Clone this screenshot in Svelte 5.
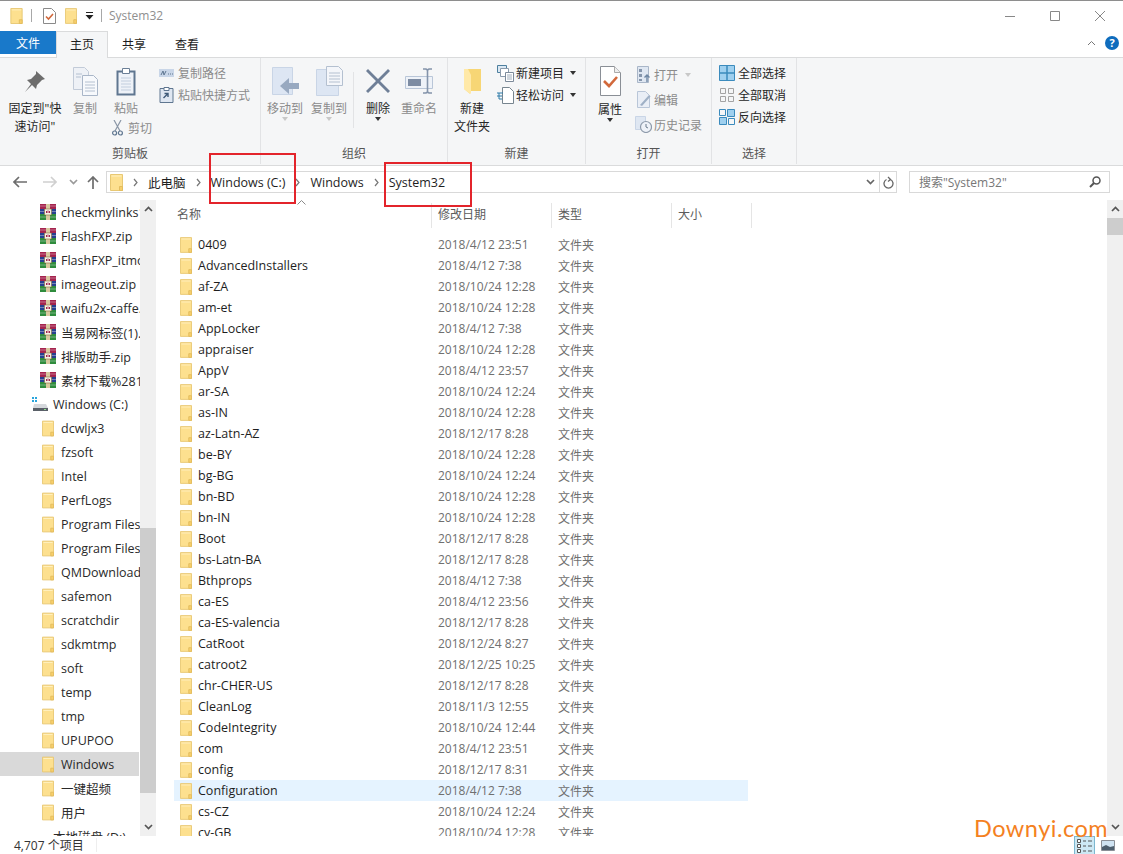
<script lang="ts">
  const ZIPS = [
    'checkmylinks1.2.zip',
    'FlashFXP.zip',
    'FlashFXP_itmop.zip',
    'imageout.zip',
    'waifu2x-caffe.zip',
    '当易网标签(1).zip',
    '排版助手.zip',
    '素材下载%281%29.zip',
  ];

  const TREE = [
    'dcwljx3', 'fzsoft', 'Intel', 'PerfLogs', 'Program Files', 'Program Files (x86)',
    'QMDownload', 'safemon', 'scratchdir', 'sdkmtmp', 'soft', 'temp', 'tmp', 'UPUPOO',
    'Windows', '一键超频', '用户',
  ];

  const FILES: [string, string][] = [
    ['0409', '2018/4/12 23:51'],
    ['AdvancedInstallers', '2018/4/12 7:38'],
    ['af-ZA', '2018/10/24 12:28'],
    ['am-et', '2018/10/24 12:28'],
    ['AppLocker', '2018/4/12 7:38'],
    ['appraiser', '2018/10/24 12:28'],
    ['AppV', '2018/4/12 23:57'],
    ['ar-SA', '2018/10/24 12:24'],
    ['as-IN', '2018/10/24 12:28'],
    ['az-Latn-AZ', '2018/12/17 8:28'],
    ['be-BY', '2018/10/24 12:28'],
    ['bg-BG', '2018/10/24 12:24'],
    ['bn-BD', '2018/10/24 12:28'],
    ['bn-IN', '2018/10/24 12:28'],
    ['Boot', '2018/12/17 8:28'],
    ['bs-Latn-BA', '2018/12/17 8:28'],
    ['Bthprops', '2018/4/12 7:38'],
    ['ca-ES', '2018/4/12 23:56'],
    ['ca-ES-valencia', '2018/12/17 8:28'],
    ['CatRoot', '2018/12/24 8:27'],
    ['catroot2', '2018/12/25 10:25'],
    ['chr-CHER-US', '2018/12/17 8:28'],
    ['CleanLog', '2018/11/3 12:55'],
    ['CodeIntegrity', '2018/10/24 12:44'],
    ['com', '2018/4/12 23:51'],
    ['config', '2018/12/17 8:31'],
    ['Configuration', '2018/4/12 7:38'],
    ['cs-CZ', '2018/10/24 12:24'],
    ['cy-GB', '2018/10/24 12:28'],
  ];
</script>

{#snippet folder(w = 13, h = 17)}
  <svg class="ico" width={w} height={h} viewBox="0 0 13 17" aria-hidden="true">
    <path d="M.5.5h12v16H.5z" fill="#fde08f" stroke="#e8c873" />
    <path d="M9.5 12.5h3v4h-3z" fill="#f7cf6b" stroke="#e3bd5f" />
    <path d="M1.5 1.5h10v1h-10z" fill="#fff0c0" />
  </svg>
{/snippet}

{#snippet zip()}
  <svg class="ico" width="16" height="16" viewBox="0 0 16 16" aria-hidden="true">
    <path d="M0 0h16v5H0z" fill="#a5244e" />
    <path d="M0 5h16v5H0z" fill="#27408f" />
    <path d="M0 10h16v6H0z" fill="#2f8c3d" />
    <path d="M0 2h16M0 7.5h16M0 13h16" stroke="#fff" stroke-opacity=".35" />
    <path d="M6 0h4v16H6z" fill="#d9c9a0" />
    <path d="M4.5 5h7v6h-7z" fill="#f6f2e6" stroke="#8a6d3b" stroke-width=".6" />
    <path d="M6.5 7v2M8 6.5V9M9.5 7v2" stroke="#a5244e" />
  </svg>
{/snippet}

{#snippet chev(d = 'down', c = '#555')}
  <svg class="ico" width="9" height="6" viewBox="0 0 9 6" aria-hidden="true">
    <path d={d === 'down' ? 'M1 1l3.5 3.5L8 1' : 'M1 5l3.5-3.5L8 5'} fill="none" stroke={c} stroke-width="1.7" />
  </svg>
{/snippet}

{#snippet crumb()}
  <svg class="ico crumb" width="5" height="9" viewBox="0 0 5 9" aria-hidden="true">
    <path d="M1 1l3 3.5L1 8" fill="none" stroke="#777" stroke-width="1.2" />
  </svg>
{/snippet}

<div class="window">
  <div class="topline"></div>

  <header class="titlebar">
    {@render folder(13, 16)}
    <span class="tsep"></span>
    <svg class="ico" width="13" height="16" viewBox="0 0 13 16" aria-hidden="true">
      <path d="M.5.5h8l4 4v11H.5z" fill="#fff" stroke="#8a8a8a" />
      <path d="M3 8.5l2.5 2.5L10 6" fill="none" stroke="#d0673a" stroke-width="1.6" />
    </svg>
    <span class="tfolder">{@render folder(12, 16)}</span>
    <svg class="ico qat" width="9" height="8" viewBox="0 0 9 8" aria-hidden="true">
      <path d="M1 0h7v1H1zM.5 3h8L4.5 7.5z" fill="#222" />
    </svg>
    <span class="tsep second"></span>
    <span class="title">System32</span>
    <div class="winctl">
      <svg width="10" height="10" viewBox="0 0 10 10" aria-hidden="true"><path d="M0 5.5h10" stroke="#888" /></svg>
      <svg width="10" height="10" viewBox="0 0 10 10" aria-hidden="true"><path d="M.5.5h9v9h-9z" fill="none" stroke="#888" /></svg>
      <svg width="10" height="10" viewBox="0 0 10 10" aria-hidden="true"><path d="M0 0l10 10M10 0L0 10" stroke="#888" /></svg>
    </div>
  </header>

  <nav class="tabs">
    <span class="tab file">文件</span>
    <span class="tab active">主页</span>
    <span class="tab share">共享</span>
    <span class="tab view">查看</span>
    <div class="tabs-right">
      <svg width="9" height="6" viewBox="0 0 9 6" aria-hidden="true"><path d="M1 5l3.5-3.5L8 5" fill="none" stroke="#777" /></svg>
      <span class="help">?</span>
    </div>
  </nav>

  <section class="ribbon">
    <div class="group g1">
      <div class="gbody">
        <div class="large w-pin">
          <div class="licon">
            <svg width="24" height="24" viewBox="0 0 24 24" aria-hidden="true">
              <path d="M13 2l9 8-3 1-5 5-1 4-4-4-7 7 6-8-4-4 4-1 5-5z" fill="#6d6d6d" />
            </svg>
          </div>
          <span class="dark">固定到"快<br />速访问"</span>
        </div>
        <div class="large w-copy dim">
          <div class="licon">
            <svg width="25" height="29" viewBox="0 0 25 29" aria-hidden="true">
              <path d="M.5.5h11l4 4v18H.5z" fill="#eef1f6" stroke="#c2cbd8" />
              <path d="M9.5 8.5h11l4 4v16h-15z" fill="#f7f9fc" stroke="#a9b6c8" />
              <path d="M12 15h10M12 18h10M12 21h10M12 24h10M3 7h6M3 10h5" stroke="#b4c0d0" />
            </svg>
          </div>
          <span>复制</span>
        </div>
        <div class="paste-col">
          <div class="large dim">
            <div class="licon">
              <svg width="20" height="29" viewBox="0 0 20 29" aria-hidden="true">
                <path d="M.5 3.5h19v25H.5z" fill="#5f7690" />
                <path d="M2.5 5.5h15v21h-15z" fill="#eef2f8" />
                <path d="M6.5 1.5h7v5h-7z" fill="#fff" stroke="#6b7f96" />
                <path d="M5 11h10M5 14h10M5 17h10M5 20h10M5 23h10" stroke="#c2cede" />
              </svg>
            </div>
            <span>粘贴</span>
          </div>
          <div class="cut">
            <svg width="11" height="16" viewBox="0 0 11 16" aria-hidden="true">
              <path d="M2 0l6 11M9 0L3 11" stroke="#8a96a6" stroke-width="1.2" />
              <circle cx="2.6" cy="13" r="2" fill="none" stroke="#5f7690" stroke-width="1.2" />
              <circle cx="8.4" cy="13" r="2" fill="none" stroke="#5f7690" stroke-width="1.2" />
            </svg>
            <span>剪切</span>
          </div>
        </div>
        <div class="smalls">
          <div class="small dim">
            <svg class="sic" width="15" height="8" viewBox="0 0 15 8" aria-hidden="true">
              <path d="M0 0h15v8H0z" fill="#c9d6e8" />
              <path d="M2 6l2-4 1 4 2-4M9 5h1M11 5h1M13 5h1" stroke="#5f7690" fill="none" />
            </svg>
            <span>复制路径</span>
          </div>
          <div class="small dim">
            <svg class="sic" width="14" height="16" viewBox="0 0 14 16" aria-hidden="true">
              <path d="M.5 1.5h13v14H.5z" fill="#dfe7f2" stroke="#5f7690" />
              <path d="M4.5.5h5v3h-5z" fill="#fff" stroke="#5f7690" />
              <path d="M4 11l4-4M5 6.5h3.5V10" fill="none" stroke="#3f5a78" stroke-width="1.4" />
            </svg>
            <span>粘贴快捷方式</span>
          </div>
        </div>
      </div>
      <div class="glabel">剪贴板</div>
    </div>

    <div class="group g2">
      <div class="gbody">
        <div class="large w-move dim">
          <div class="licon">
            <svg width="27" height="29" viewBox="0 0 27 29" aria-hidden="true">
              <path d="M.5.5h20v27H.5z" fill="#dde6f3" stroke="#c9d5e6" />
              <path d="M27 16h-10v-5l-9 8 9 8v-5h10z" fill="#98a9c0" />
            </svg>
          </div>
          <span>移动到</span>
          <i class="mini grey"></i>
        </div>
        <div class="large w-move dim">
          <div class="licon">
            <svg width="27" height="30" viewBox="0 0 27 30" aria-hidden="true">
              <path d="M.5 3.5h22v26H.5z" fill="#dde6f3" stroke="#c9d5e6" />
              <path d="M10.5.5h12l4 4v15h-16z" fill="#f4f6fa" stroke="#b4c0d0" />
              <path d="M13 7h11M13 10h11M13 13h11M13 16h11" stroke="#b4c0d0" />
            </svg>
          </div>
          <span>复制到</span>
          <i class="mini grey"></i>
        </div>
        <span class="vsep"></span>
        <div class="large w-del">
          <div class="licon">
            <svg width="26" height="26" viewBox="0 0 26 26" aria-hidden="true">
              <path d="M3 1l10 10L23 1l2 2-10 10 10 10-2 2-10-10L3 25l-2-2 10-10L1 3z" fill="#6f7f97" />
            </svg>
          </div>
          <span class="dark">删除</span>
          <i class="mini"></i>
        </div>
        <div class="large w-ren dim">
          <div class="licon">
            <svg width="29" height="26" viewBox="0 0 29 26" aria-hidden="true">
              <path d="M.5 8.5h27v12H.5z" fill="#eef2f8" stroke="#b9c6d8" />
              <path d="M3 11h13v7H3z" fill="#7d8ca3" />
              <path d="M18 1h3l1.500 1L24 1h3M18 25h3l1.500-1 1.500 1h3M22.500 2v22" fill="none" stroke="#8494ab" stroke-width="1.6" />
            </svg>
          </div>
          <span>重命名</span>
        </div>
      </div>
      <div class="glabel">组织</div>
    </div>

    <div class="group g3">
      <div class="gbody">
        <div class="large w-new">
          <div class="licon">
            <svg width="19" height="27" viewBox="0 0 19 27" aria-hidden="true">
              <path d="M1 1h17v22H5z" fill="#f7d675" />
              <path d="M1 1l6 5v20l-6-5z" fill="#fbe08f" />
              <path d="M1 1h4l3 6v19l-7-5z" fill="#ffe9a8" />
            </svg>
          </div>
          <span class="dark">新建<br />文件夹</span>
        </div>
        <div class="smalls">
          <div class="small">
            <svg class="sic" width="17" height="17" viewBox="0 0 17 17" aria-hidden="true">
              <path d="M.5.500h9v7h-9z" fill="#dbe8f3" stroke="#4d7f9e" />
              <path d="M3.500 3.500h8v8h-8z" fill="#fff" stroke="#8a9aab" />
              <path d="M8.500 7.500h8v9h-8z" fill="#fff" stroke="#7c8a9a" />
              <path d="M10 10h5M10 12h5M10 14h5" stroke="#a0adbb" />
            </svg>
            <span class="dark">新建项目</span>
            <i class="mini side"></i>
          </div>
          <div class="small">
            <svg class="sic" width="17" height="17" viewBox="0 0 17 17" aria-hidden="true">
              <path d="M5.500.5h7l4 4v12h-11z" fill="#fff" stroke="#77858f" />
              <path d="M0 6h6M0 9h5M2 12h3M2 6v6" stroke="#2c7aa8" fill="none" />
            </svg>
            <span class="dark">轻松访问</span>
            <i class="mini side"></i>
          </div>
        </div>
      </div>
      <div class="glabel">新建</div>
    </div>

    <div class="group g4">
      <div class="gbody">
        <div class="large w-prop">
          <div class="licon">
            <svg width="21" height="30" viewBox="0 0 21 30" aria-hidden="true">
              <path d="M.5.5h14l6 6v23H.5z" fill="#fff" stroke="#8a8f96" />
              <path d="M14.500.5v6h6" fill="#eee" stroke="#aaa" />
              <path d="M4 15l5 5 8-9" fill="none" stroke="#d2693c" stroke-width="2.6" />
            </svg>
          </div>
          <span class="dark">属性</span>
          <i class="mini"></i>
        </div>
        <div class="smalls tall">
          <div class="small dim">
            <svg class="sic" width="14" height="17" viewBox="0 0 14 17" aria-hidden="true">
              <path d="M.5.5h11v16H.5z" fill="#dfe7f2" stroke="#a9b6c8" />
              <path d="M2 3h3v3H2zM2 8h3v3H2zM2 13h3v2H2z" fill="#8696ac" />
              <path d="M10 16V9M7.500 11.500L10 9l2.500 2.500" fill="none" stroke="#6d86a3" stroke-width="1.4" />
            </svg>
            <span>打开</span>
            <i class="mini side grey"></i>
          </div>
          <div class="small dim">
            <svg class="sic" width="14" height="17" viewBox="0 0 14 17" aria-hidden="true">
              <path d="M.5.5h8l4 4v12H.5z" fill="#e9eef6" stroke="#b9c6d8" />
              <path d="M3 14l9-10 1.500 1.500L5 15z" fill="#9fb0c6" />
            </svg>
            <span>编辑</span>
          </div>
          <div class="small dim">
            <svg class="sic hist" width="17" height="17" viewBox="0 0 17 17" aria-hidden="true">
              <path d="M.5.5h10v13H.5z" fill="#dfe7f2" stroke="#c9d5e6" />
              <circle cx="11" cy="11" r="5.500" fill="#eef2f8" stroke="#8e9bab" stroke-width="1.2" />
              <path d="M11 8v3l2 1" fill="none" stroke="#6b7a8c" />
            </svg>
            <span>历史记录</span>
          </div>
        </div>
      </div>
      <div class="glabel">打开</div>
    </div>

    <div class="group g5">
      <div class="gbody">
        <div class="smalls">
          <div class="small">
            <svg class="sic" width="16" height="16" viewBox="0 0 16 16" aria-hidden="true">
              <path d="M.5.500h15v15H.5z" fill="#9fd0ef" stroke="#3b8bbd" />
              <path d="M8 0v16M0 8h16" stroke="#3b8bbd" stroke-width="1.500" />
            </svg>
            <span class="dark">全部选择</span>
          </div>
          <div class="small">
            <svg class="sic" width="14" height="14" viewBox="0 0 14 14" aria-hidden="true">
              <path d="M.5.500h5v5h-5zM8.500.500h5v5h-5zM.5 8.500h5v5h-5zM8.500 8.500h5v5h-5z" fill="none" stroke="#a3a3a3" />
            </svg>
            <span class="dark">全部取消</span>
          </div>
          <div class="small">
            <svg class="sic" width="16" height="16" viewBox="0 0 16 16" aria-hidden="true">
              <path d="M8.500.500h7v7h-7zM.5 8.500h7v7h-7z" fill="#9fd0ef" stroke="#3b8bbd" />
              <path d="M.5.500h6v6h-6zM9.500 9.500h6v6h-6z" fill="none" stroke="#3b8bbd" />
            </svg>
            <span class="dark">反向选择</span>
          </div>
        </div>
      </div>
      <div class="glabel">选择</div>
    </div>
  </section>

  <div class="addressbar">
    <svg class="navbtn back" width="14" height="12" viewBox="0 0 14 12" aria-hidden="true">
      <path d="M6 1L1 6l5 5M1 6h13" fill="none" stroke="#6d6d6d" stroke-width="1.700" />
    </svg>
    <svg class="navbtn fwd" width="14" height="12" viewBox="0 0 14 12" aria-hidden="true">
      <path d="M8 1l5 5-5 5M13 6H0" fill="none" stroke="#d0d0d0" stroke-width="1.700" />
    </svg>
    <span class="navbtn recent">{@render chev('down', '#9a9a9a')}</span>
    <svg class="navbtn up" width="12" height="13" viewBox="0 0 12 13" aria-hidden="true">
      <path d="M1 6l5-5 5 5M6 1v12" fill="none" stroke="#6d6d6d" stroke-width="1.700" />
    </svg>
    <div class="addr">
      <span class="afolder">{@render folder(13, 17)}</span>
      {@render crumb()}
      <span class="seg">此电脑</span>
      {@render crumb()}
      <span class="seg">Windows (C:)</span>
      {@render crumb()}
      <span class="seg">Windows</span>
      {@render crumb()}
      <span class="seg">System32</span>
      <span class="addr-drop">{@render chev('down', '#666')}</span>
    </div>
    <div class="refresh">
      <svg width="11" height="13" viewBox="0 0 11 13" aria-hidden="true">
        <path d="M3.500 3a4.500 4.500 0 1 0 4 0M5 .5L7.500 3 5 5" fill="none" stroke="#666" stroke-width="1.300" transform="translate(0 .5)" />
      </svg>
    </div>
    <div class="search">
      <span>搜索"System32"</span>
      <svg width="12" height="12" viewBox="0 0 12 12" aria-hidden="true">
        <circle cx="7.500" cy="4.500" r="3.500" fill="none" stroke="#555" stroke-width="1.500" />
        <path d="M5 7l-4 4" stroke="#555" stroke-width="2" />
      </svg>
    </div>
  </div>

  <main class="main">
    <aside class="tree">
      <div class="tree-list">
        {#each ZIPS as name}
          <div class="trow zip">{@render zip()}<span>{name}</span></div>
        {/each}
        <div class="trow drive">
          <svg class="ico" width="16" height="14" viewBox="0 0 16 14" aria-hidden="true">
            <path d="M0 0h2v2H0zM3 0h2v2H3zM0 3h2v2H0zM3 3h2v2H3z" fill="#2aa5dc" />
            <path d="M2 7h12l2 4v3H1v-3z" fill="#d5d8dc" />
            <path d="M1 11h15v3H1z" fill="#5a6068" />
            <path d="M12 12h2v1h-2z" fill="#8fe08f" />
          </svg>
          <span>Windows (C:)</span>
        </div>
        {#each TREE as name}
          <div class="trow fold" class:sel={name === 'Windows'}>{@render folder(12, 17)}<span>{name}</span></div>
        {/each}
        <div class="trow drive">
          <span class="nodrive"></span>
          <span>本地磁盘 (D:)</span>
        </div>
      </div>
      <div class="sbar tree-bar">
        <span class="arrow">{@render chev('up', '#555')}</span>
        <div class="track"><div class="thumb"></div></div>
        <span class="arrow">{@render chev('down', '#555')}</span>
      </div>
    </aside>

    <section class="files">
      <div class="colhead">
        <span class="caret">
          <svg width="9" height="5" viewBox="0 0 9 5" aria-hidden="true"><path d="M.5 4.500l4-4 4 4" fill="none" stroke="#8a8a8a" /></svg>
        </span>
        <span class="col c-name">名称</span>
        <span class="col c-date">修改日期</span>
        <span class="col c-type">类型</span>
        <span class="col c-size">大小</span>
      </div>
      <div class="rows">
        {#each FILES as [name, date]}
          <div class="row" class:hover={name === 'Configuration'}>
            <span class="c-name cell">{@render folder(12, 16)}<span class="fname">{name}</span></span>
            <span class="c-date cell grey">{date}</span>
            <span class="c-type cell grey">文件夹</span>
          </div>
        {/each}
      </div>
    </section>

    <div class="sbar list-bar">
      <span class="arrow">{@render chev('up', '#555')}</span>
      <div class="track"><div class="thumb"></div></div>
      <span class="arrow">{@render chev('down', '#555')}</span>
    </div>
  </main>

  <footer class="status">
    <span class="count">4,707 个项目</span>
    <span class="stsep"></span>
    <div class="views">
      <span class="vbtn on">
        <svg width="15" height="14" viewBox="0 0 15 14" aria-hidden="true">
          <path d="M.5.500h3v3h-3zM.5 5.500h3v3h-3zM.5 10.500h3v3h-3z" fill="#fff" stroke="#555" />
          <path d="M6 2h3M11 2h4M6 7h3M11 7h4M6 12h3M11 12h4" stroke="#555" />
        </svg>
      </span>
      <span class="vbtn">
        <svg width="14" height="11" viewBox="0 0 14 11" aria-hidden="true">
          <path d="M.5.500h13v10H.5z" fill="#cfe3f2" stroke="#8a8f96" />
          <path d="M1 7l4-2 4 2 4-1v4H1z" fill="#4d5f6e" />
        </svg>
      </span>
    </div>
  </footer>

  <!-- annotations painted over the screenshot -->
  <div class="mark m1"></div>
  <div class="mark m2"></div>
  <div class="watermark">Downyi.com</div>
</div>

<style>
  :global(body) {
    margin: 0;
    background: #fff;
  }

  .window {
    position: relative;
    width: 1123px;
    height: 854px;
    overflow: hidden;
    display: flex;
    flex-direction: column;
    background: #fff;
    color: #1e1e1e;
    font-family: 'Open Sans', 'Noto Sans CJK SC', sans-serif;
    font-size: 12px;
  }

  .ico {
    flex: none;
    display: block;
  }

  .topline {
    height: 1px;
    background: #8e8e8e;
    flex: none;
  }

  .titlebar {
    height: 29px;
    flex: none;
    display: flex;
    align-items: center;
    padding-left: 10px;
  }

  .tsep {
    width: 1px;
    height: 13px;
    background: #a8a8a8;
    margin: 0 11px 0 8px;
  }

  .tsep.second {
    margin: 0 7px 0 7px;
  }

  .tfolder {
    margin-left: 9px;
  }

  .qat {
    margin-left: 8px;
  }

  .title {
    color: #8f8f8f;
    font-size: 12px;
  }

  .winctl {
    margin-left: auto;
    display: flex;
    gap: 35px;
    padding-right: 18px;
  }

  .tabs {
    height: 27px;
    flex: none;
    display: flex;
    align-items: flex-start;
    position: relative;
    z-index: 1;
  }

  .tab {
    display: flex;
    align-items: center;
    justify-content: center;
    height: 23px;
    margin-top: 1px;
    font-size: 12px;
  }

  .file {
    width: 56px;
    background: #1979ca;
    color: #fff;
  }

  .active {
    width: 52px;
    height: 27px;
    box-sizing: border-box;
    border: 1px solid #dadbdc;
    border-bottom: 0;
    background: #f5f6f7;
    padding-bottom: 3px;
  }

  .share {
    width: 26px;
    margin-left: 13px;
    height: 25px;
  }

  .view {
    width: 26px;
    margin-left: 27px;
    height: 25px;
  }

  .tabs-right {
    margin-left: auto;
    display: flex;
    align-items: center;
    gap: 9px;
    padding: 6px 4px 0 0;
  }

  .help {
    width: 14px;
    height: 14px;
    border-radius: 50%;
    background: #0f6cbd;
    color: #fff;
    font-size: 11px;
    font-weight: 700;
    line-height: 14px;
    text-align: center;
  }

  .ribbon {
    height: 109px;
    box-sizing: border-box;
    flex: none;
    display: flex;
    background: #f5f6f7;
    border-top: 1px solid #dadbdc;
    border-bottom: 1px solid #dadbdc;
    color: #8b8b8b;
  }

  .group {
    display: flex;
    flex-direction: column;
    box-sizing: border-box;
    margin-bottom: 1px;
    border-right: 1px solid #e2e3e5;
  }

  .g1 { width: 261px; }
  .g2 { width: 187px; }
  .g3 { width: 138px; }
  .g4 { width: 126px; }
  .g5 { width: 85px; }

  .gbody {
    flex: 1;
    display: flex;
    align-items: flex-start;
    padding-top: 4px;
  }

  .glabel {
    height: 21px;
    text-align: center;
    line-height: 21px;
    color: #555;
  }

  .dark {
    color: #262626;
  }

  .large {
    display: flex;
    flex-direction: column;
    align-items: center;
    text-align: center;
    line-height: 18px;
    position: relative;
  }

  .licon {
    height: 38px;
    display: flex;
    align-items: center;
    justify-content: center;
  }

  .w-pin { width: 70px; }
  .w-copy { width: 30px; }

  .paste-col {
    width: 52px;
    display: flex;
    flex-direction: column;
    align-items: center;
  }

  .cut {
    display: flex;
    align-items: center;
    align-self: flex-start;
    gap: 5px;
    height: 20px;
    margin-left: 12px;
    white-space: nowrap;
  }

  .smalls {
    display: flex;
    flex-direction: column;
  }

  .small {
    display: flex;
    align-items: center;
    height: 22px;
    gap: 4px;
    white-space: nowrap;
  }

  .sic {
    flex: none;
  }

  .g1 .smalls { margin-left: 7px; }
  .g1 .small .sic { width: 15px; }
  .g2 .gbody { padding-left: 2px; }
  .w-move { width: 44px; }
  .w-del { width: 38px; }
  .w-ren { width: 44px; }

  .vsep {
    width: 1px;
    height: 56px;
    background: #e2e3e5;
    margin: 10px 5px 0 2px;
  }

  .mini {
    display: block;
    width: 0;
    height: 0;
    margin-top: -1px;
    border-left: 3.500px solid transparent;
    border-right: 3.500px solid transparent;
    border-top: 4px solid #333;
  }

  .mini.grey {
    border-top-color: #c8c8c8;
  }

  .mini.side {
    margin: 0 0 0 4px;
  }

  .w-new {
    width: 48px;
  }

  .g3 .smalls {
    margin-left: 1px;
  }

  .g3 .small {
    gap: 2px;
  }

  .w-prop {
    width: 48px;
  }

  .w-prop span {
    margin-top: 1px;
  }

  .smalls.tall {
    margin-left: 3px;
  }

  .tall .small {
    height: 25px;
    gap: 3px;
  }

  .hist {
    margin-left: -2px;
    margin-right: -1px;
  }

  .g5 .gbody {
    padding-left: 7px;
  }

  .g5 .small {
    gap: 3px;
  }

  .g5 .small .sic {
    width: 16px;
  }

  .addressbar {
    height: 33px;
    flex: none;
    display: flex;
    align-items: center;
    padding-bottom: 1px;
    box-sizing: border-box;
    position: relative;
  }

  .navbtn {
    flex: none;
  }

  .back { margin-left: 13px; }
  .fwd { margin-left: 16px; }
  .recent { margin-left: 12px; }
  .up { margin-left: 9px; }

  .addr {
    margin-left: 7px;
    width: 774px;
    height: 22px;
    box-sizing: border-box;
    border: 1px solid #d9d9d9;
    display: flex;
    align-items: center;
    color: #1e1e1e;
    font-size: 12.500px;
  }

  .afolder {
    margin-left: 3px;
  }

  .crumb {
    margin: 0 10px;
  }

  .addr-drop {
    margin-left: auto;
    margin-right: 4px;
  }

  .refresh {
    width: 17px;
    height: 22px;
    box-sizing: border-box;
    border: 1px solid #d9d9d9;
    border-left: 0;
    display: flex;
    align-items: center;
    justify-content: center;
  }

  .search {
    margin-left: 12px;
    width: 201px;
    height: 22px;
    box-sizing: border-box;
    border: 1px solid #d9d9d9;
    display: flex;
    align-items: center;
    justify-content: space-between;
    padding: 0 8px 0 9px;
    color: #777;
  }

  .main {
    flex: 1;
    min-height: 0;
    display: flex;
    overflow: hidden;
    padding-top: 1px;
  }

  .tree {
    width: 157px;
    flex: none;
    display: flex;
    overflow: hidden;
  }

  .tree-list {
    width: 140px;
    flex: none;
    overflow: hidden;
  }

  .trow {
    height: 24px;
    display: flex;
    align-items: center;
    white-space: nowrap;
    overflow: hidden;
    font-size: 12.500px;
    color: #2a2a2a;
  }

  .trow.zip {
    padding-left: 40px;
    gap: 5px;
  }

  .trow.drive {
    padding-left: 32px;
    gap: 5px;
  }

  .nodrive {
    width: 16px;
    flex: none;
  }

  .trow.fold {
    padding-left: 42px;
    gap: 7px;
  }

  .trow.sel {
    background: #d9d9d9;
    margin-right: 1px;
  }

  .sbar {
    width: 16px;
    flex: none;
    background: #f0f0f0;
    display: flex;
    flex-direction: column;
    align-items: center;
  }

  .arrow {
    height: 18px;
    flex: none;
    display: flex;
    align-items: center;
    justify-content: center;
  }

  .track {
    flex: 1;
    width: 100%;
    position: relative;
  }

  .thumb {
    position: absolute;
    left: 0;
    right: 0;
    background: #cdcdcd;
  }

  .tree-bar .thumb {
    top: 310px;
    height: 265px;
  }

  .list-bar .thumb {
    top: 0;
    height: 17px;
  }

  .tree-bar {
    width: 16px;
    margin-right: 1px;
  }

  .files {
    flex: 1;
    min-width: 0;
    display: flex;
    flex-direction: column;
    overflow: hidden;
  }

  .colhead {
    height: 28px;
    flex: none;
    display: grid;
    grid-template-columns: 275px 120px 120px 80px;
    position: relative;
    margin-bottom: 6px;
    color: #5c5c5c;
  }

  .caret {
    position: absolute;
    left: 140px;
    top: 0;
    line-height: 0;
  }

  .col {
    display: flex;
    align-items: center;
    padding: 0 0 3px 6px;
    margin-top: 3px;
    border-right: 1px solid #e5e5e5;
  }

  .col.c-name {
    padding-left: 20px;
  }

  .rows {
    flex: 1;
    min-height: 0;
    overflow: hidden;
  }

  .row {
    height: 21px;
    width: 574px;
    margin-left: 17px;
    display: grid;
    grid-template-columns: 257px 120px 120px;
    align-items: center;
  }

  .row.hover {
    background: #e5f3ff;
  }

  .cell {
    display: flex;
    align-items: center;
    white-space: nowrap;
  }

  .cell.c-name {
    padding-left: 6px;
    gap: 6px;
    font-size: 12.500px;
  }

  .cell.grey {
    padding-left: 7px;
    color: #6f6f6f;
  }

  .status {
    height: 18px;
    flex: none;
    display: flex;
    align-items: center;
    padding-left: 14px;
    color: #333;
  }

  .stsep {
    width: 1px;
    height: 14px;
    background: #eee;
    margin-left: 12px;
  }

  .views {
    margin-left: auto;
    display: flex;
    align-items: center;
    gap: 4px;
    padding-right: 7px;
  }

  .vbtn {
    display: flex;
    align-items: center;
    justify-content: center;
    width: 17px;
    height: 18px;
  }

  .vbtn.on {
    width: 21px;
    background: #cce8f4;
    border: 1px solid #7db8d0;
    border-bottom: 0;
    box-sizing: border-box;
  }

  .mark {
    position: absolute;
    box-sizing: border-box;
    border: 2px solid #e3242b;
    pointer-events: none;
  }

  .m1 {
    left: 209px;
    top: 153px;
    width: 87px;
    height: 51px;
  }

  .m2 {
    left: 384px;
    top: 162px;
    width: 88px;
    height: 45px;
  }

  .watermark {
    position: absolute;
    left: 974px;
    top: 814px;
    font-family: 'Lato', sans-serif;
    font-size: 23.500px;
    letter-spacing: 0.5px;
    color: #f4811f;
  }
</style>
